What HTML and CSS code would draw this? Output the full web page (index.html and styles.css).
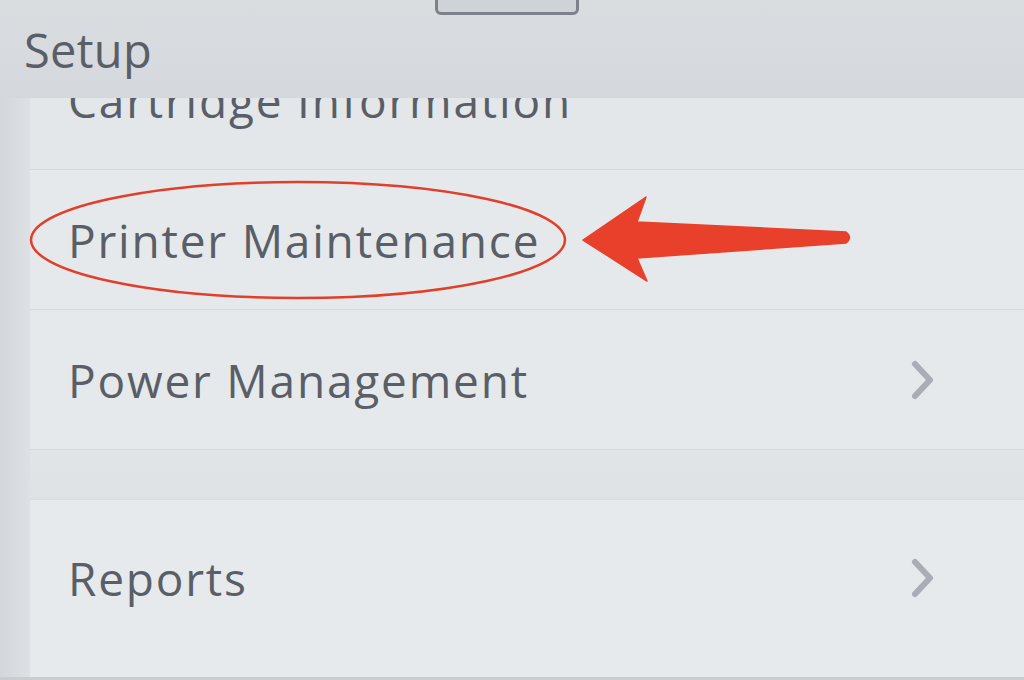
FILE: index.html
```
<!DOCTYPE html>
<html>
<head>
<meta charset="utf-8">
<link rel="stylesheet" href="styles.css">
</head>
<body>
<div class="screen">
  <header class="header">
    <div class="tab"></div>
    <h1 class="title">Setup</h1>
  </header>
  <main class="panel">
    <ul class="list">
      <li class="row row-clipped"><span class="label">Cartridge Information</span></li>
      <li class="row row-tall"><span class="label">Printer Maintenance</span></li>
      <li class="row row-tall"><span class="label">Power Management</span>
        <svg class="chev" viewBox="0 0 26 40"><path d="M5 4 L20 20 L5 36" /></svg>
      </li>
      <li class="gap"></li>
      <li class="row row-last"><span class="label">Reports</span>
        <svg class="chev" viewBox="0 0 26 40"><path d="M5 4 L20 20 L5 36" /></svg>
      </li>
    </ul>
  </main>
  <svg class="annot" viewBox="0 0 1024 680" width="1024" height="680">
    <ellipse cx="298" cy="240" rx="267" ry="58" fill="none" stroke="#e23f2b" stroke-width="2.5"/>
    <path d="M583 240 L646 197 L637 222 L846 232 Q853 237.5 846 243 L637 258 L647 281 Z" fill="#e8402a" stroke="#e8402a" stroke-width="1.5" stroke-linejoin="round"/>
  </svg>
</div>
</body>
</html>
```
FILE: styles.css
```
* { box-sizing: border-box; }
html, body { margin: 0; padding: 0; }
body {
  width: 1024px;
  height: 680px;
  overflow: hidden;
  background: #dfe3e6;
  font-family: "Open Sans", "DejaVu Sans", sans-serif;
}
.screen {
  position: relative;
  width: 1024px;
  height: 680px;
  display: flex;
  flex-direction: column;
  background: linear-gradient(90deg, #d3d6da 0, #dde1e4 30px, #e2e6e9 60px, #e4e8ea 600px, #e6eaec 990px, #dcdfe2 1010px, #d8dbde 1024px);
}
.header {
  height: 98px;
  flex: none;
  position: relative;
  background: linear-gradient(180deg, #dadde0 0, #d7dade 60%, #d4d7db 100%);
  padding: 26px 0 0 24px;
}
.tab {
  position: absolute;
  left: 435px;
  top: -6px;
  width: 144px;
  height: 21px;
  border: 3px solid #7d8189;
  border-radius: 6px;
  background: #cfd2d6;
}
.title {
  margin: 0;
  font-weight: 500;
  font-size: 47px;
  line-height: 48px;
  color: #5a5e66;
  letter-spacing: 0.3px;
}
.panel {
  flex: 1;
  overflow: hidden;
  padding-left: 30px;
  border-bottom: 3px solid #c9ccd0;
}
.list {
  list-style: none;
  margin: 0;
  padding: 0;
  display: flex;
  flex-direction: column;
  height: 100%;
}
.row {
  display: flex;
  align-items: center;
  padding-left: 38px;
  padding-right: 88px;
  border-bottom: 1px solid #d6dadd;
  background: #e5e9eb;
}
.row-clipped {
  height: 72px;
  align-items: flex-start;
  background: #e3e7ea;
}
.row-clipped .label { margin-top: -20px; }
.row-tall { height: 140px; }
.gap {
  height: 50px;
  background: linear-gradient(180deg, #e1e5e8, #dee2e5);
  border-bottom: 1px solid #d8dcdf;
}
.row-last {
  flex: 1;
  background: #e6eaec;
  border-bottom: none;
  padding-bottom: 22px;
}
.label {
  flex: 1;
  font-size: 46px;
  font-weight: 500;
  line-height: 44px;
  color: #5a5e66;
  letter-spacing: 1.8px;
  white-space: nowrap;
}
.chev {
  width: 26px;
  height: 40px;
  flex: none;
}
.chev path {
  fill: none;
  stroke: #a9adb5;
  stroke-width: 6;
  stroke-linecap: round;
  stroke-linejoin: round;
}
.annot {
  position: absolute;
  left: 0;
  top: 0;
  pointer-events: none;
}
```
